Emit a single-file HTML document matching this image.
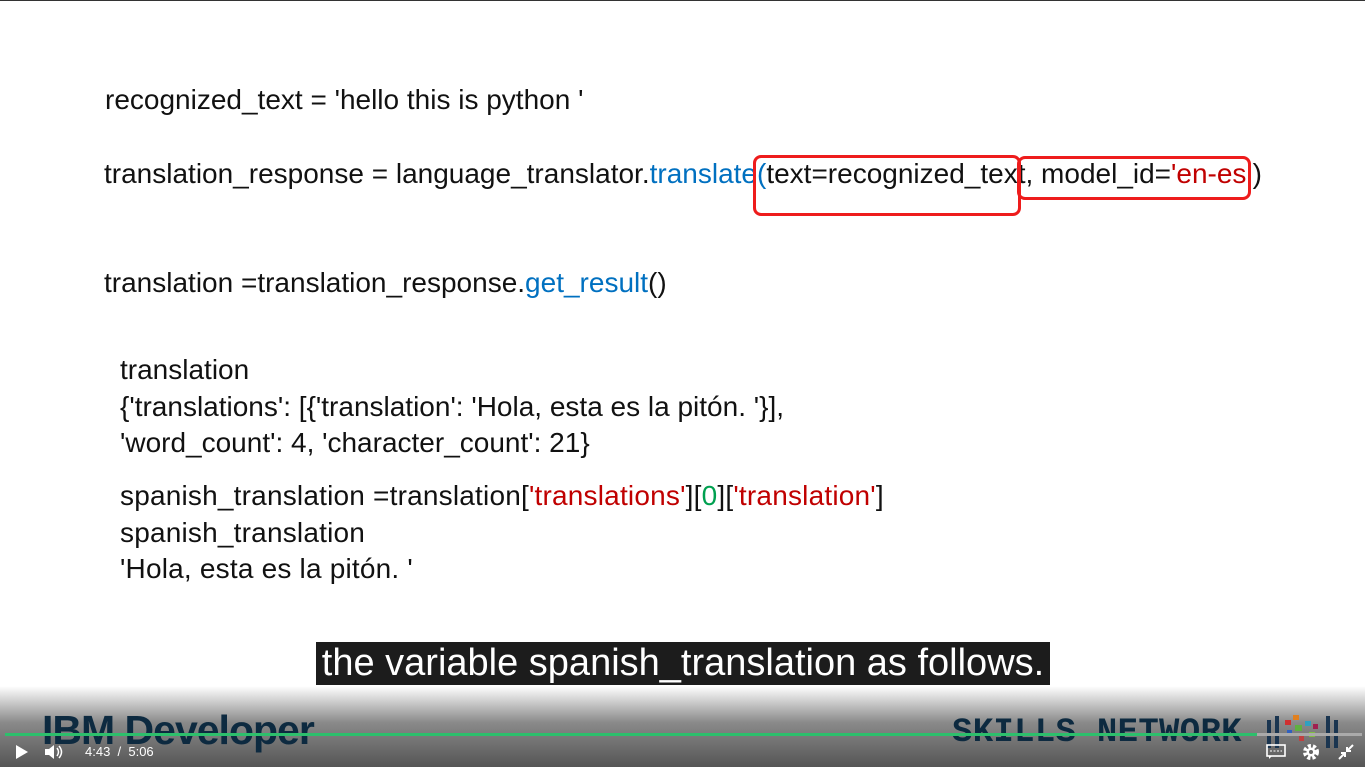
<!DOCTYPE html>
<html><head><style>
body{margin:0;width:1365px;height:767px;overflow:hidden;background:#fff;position:relative;font-family:"Liberation Sans",sans-serif;}
.t{position:absolute;font-size:28px;color:#111;white-space:nowrap;letter-spacing:0}
.b{color:#0070c0}.r{color:#c00000}.g{color:#00a050}
.box{position:absolute;border:3px solid #ee1c1c;border-radius:8px}
</style></head><body>
<div style="position:absolute;left:0;top:0;width:1365px;height:1px;background:#333"></div>
<div class="t" style="left:105px;top:84px">recognized_text = 'hello this is python '</div>
<div class="t" style="left:104px;top:158px">translation_response = language_translator.<span class="b">translate(</span>text=recognized_text, model_id=<span class="r">'en-es’</span>)</div>
<div class="box" style="left:753px;top:155px;width:262px;height:55px"></div>
<div class="box" style="left:1017px;top:156px;width:228px;height:38px"></div>
<div class="t" style="left:104px;top:267px">translation =translation_response.<span class="b">get_result</span>()</div>
<div class="t" style="left:120px;top:352px;line-height:36.5px">translation<br>{'translations': [{'translation': 'Hola, esta es la pitón. '}],<br>'word_count': 4, 'character_count': 21}</div>
<div class="t" style="left:120px;top:478px;line-height:36.5px;letter-spacing:0.2px">spanish_translation =translation[<span class="r">'translations'</span>][<span class="g">0</span>][<span class="r">'translation'</span>]<br>spanish_translation<br>'Hola, esta es la pitón. '</div>
<div style="position:absolute;left:316px;top:642px;width:734px;height:43px;background:#1c1c1c;color:#fff;font-size:38px;line-height:43px;text-align:center;white-space:nowrap">the variable spanish_translation as follows.</div>
<div style="position:absolute;left:0;top:686px;width:1365px;height:81px;background:linear-gradient(#fff,#8a8a8a 45%,#555)"></div>
<div style="position:absolute;left:42px;top:707px;font-size:41px;font-weight:bold;color:#0d2a40;letter-spacing:-1px">IBM Developer</div>
<div style="position:absolute;left:952px;top:714px;font-size:34px;font-weight:bold;color:#0d2a40;font-family:'Liberation Mono',monospace;letter-spacing:0.3px">SKILLS NETWORK</div>
<svg style="position:absolute;left:1265px;top:712px" width="75" height="42"><rect x="2" y="8" width="4" height="28" fill="#1a3550"/><rect x="10" y="4" width="4" height="32" fill="#1a3550"/><rect x="61" y="4" width="4" height="32" fill="#1a3550"/><rect x="69" y="8" width="4" height="28" fill="#1a3550"/><rect x="28" y="3" width="6" height="5" fill="#e08020"/><rect x="20" y="8" width="6" height="5" fill="#d03030"/><rect x="30" y="13" width="7" height="6" fill="#60b040"/><rect x="40" y="9" width="6" height="5" fill="#30a0c0"/><rect x="48" y="12" width="5" height="5" fill="#a02050"/><rect x="22" y="18" width="5" height="5" fill="#3060c0"/><rect x="44" y="20" width="6" height="5" fill="#80c040"/><rect x="34" y="24" width="5" height="5" fill="#c04040"/></svg>
<div style="position:absolute;left:5px;top:733px;width:1252px;height:3px;background:#2dbf6c"></div>
<div style="position:absolute;left:1257px;top:733px;width:105px;height:3px;background:#aaa"></div>
<svg style="position:absolute;left:14px;top:744px" width="16" height="16"><path d="M2 1L14 8L2 15Z" fill="#fff"/></svg>
<svg style="position:absolute;left:44px;top:743px" width="20" height="18"><path d="M1 6H5L10 2V16L5 12H1Z" fill="#fff"/><path d="M13 5Q16 9 13 13M15 3Q20 9 15 15" stroke="#fff" fill="none" stroke-width="1.5"/></svg>
<div style="position:absolute;left:85px;top:744px;color:#fff;font-size:13px">4:43 &nbsp;/ &nbsp;5:06</div>
<svg style="position:absolute;left:1266px;top:744px" width="20" height="16"><rect x="1" y="1" width="18" height="11" fill="none" stroke="#fff" stroke-width="1.6"/><path d="M4 7H16" stroke="#fff" stroke-dasharray="2 1.5"/><path d="M3 12V15L6 12" fill="#fff"/></svg>
<svg style="position:absolute;left:1302px;top:743px" width="18" height="18"><circle cx="9" cy="9" r="6" fill="none" stroke="#fff" stroke-width="4" stroke-dasharray="3 2"/><circle cx="9" cy="9" r="4.5" fill="#fff"/><circle cx="9" cy="9" r="2" fill="#666"/></svg>
<svg style="position:absolute;left:1338px;top:744px" width="16" height="16"><path d="M15 1L9 7M9 3V7H13M1 15L7 9M3 9H7V13" stroke="#fff" stroke-width="2" fill="none"/></svg>
</body></html>
